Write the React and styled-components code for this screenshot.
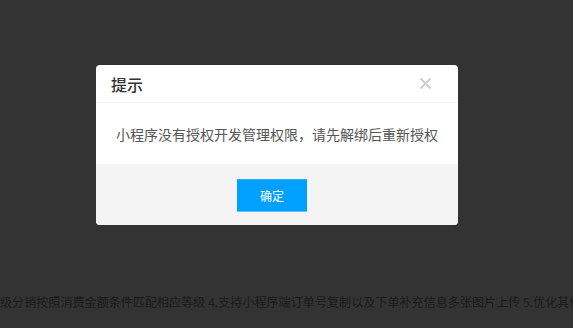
import React from 'react';
import styled, { createGlobalStyle } from 'styled-components';

const GlobalStyle = createGlobalStyle`
  html, body {
    margin: 0;
    padding: 0;
    background: #333333;
  }
  body {
    font-family: "Noto Sans CJK SC", "Noto Sans", "Liberation Sans", sans-serif;
  }
`;

const Page = styled.div`
  width: 573px;
  height: 328px;
  position: relative;
  overflow: hidden;
  background: #333333;
`;

const Stage = styled.div`
  display: flex;
  padding: 65px 0 0 96px;
`;

const BackText = styled.div`
  position: absolute;
  left: 0;
  top: 293px;
  white-space: nowrap;
  font-size: 12px;
  line-height: 18px;
  letter-spacing: 0.08px;
  color: #1b1b1b;
`;

const Dialog = styled.div`
  width: 362px;
  background: #fff;
  border-radius: 4px;
  overflow: hidden;
`;

const Header = styled.div`
  height: 37px;
  display: flex;
  align-items: center;
  justify-content: space-between;
  padding: 0 26px 0 15px;
  border-bottom: 1px solid #f3f3f3;
`;

const Title = styled.div`
  font-size: 16px;
  font-weight: 500;
  color: #333;
`;

const Close = styled.button`
  border: 0;
  background: none;
  padding: 0;
  width: 13px;
  height: 13px;
  display: flex;
  cursor: pointer;
`;

const Body = styled.div`
  height: 61px;
  display: flex;
  align-items: center;
  justify-content: center;
  font-size: 14px;
  color: #555;
`;

const Footer = styled.div`
  height: 61px;
  box-sizing: border-box;
  padding: 15px 10px 0 0;
  background: #f4f4f4;
  display: flex;
  align-items: flex-start;
  justify-content: center;
`;

const Button = styled.button`
  width: 70px;
  height: 33px;
  border: 0;
  border-top: 1px solid #2ab0ff;
  border-bottom: 1px solid #5cc2ff;
  background: #00a0ff;
  color: #fff;
  font-family: inherit;
  font-size: 12px;
  cursor: pointer;
`;

export default function App() {
  return (
    <Page>
      <GlobalStyle />
      <BackText>
        级分销按照消费金额条件匹配相应等级 4.支持小程序端订单号复制以及下单补充信息多张图片上传 5.优化其他
      </BackText>
      <Stage>
        <Dialog>
          <Header>
            <Title>提示</Title>
            <Close aria-label="关闭">
              <svg width="13" height="13" viewBox="0 0 13 13">
                <path d="M1.5 1.5 L11.5 11.5 M11.5 1.5 L1.5 11.5" stroke="#cfcfcf" strokeWidth="2" />
              </svg>
            </Close>
          </Header>
          <Body>小程序没有授权开发管理权限，请先解绑后重新授权</Body>
          <Footer>
            <Button>确定</Button>
          </Footer>
        </Dialog>
      </Stage>
    </Page>
  );
}
